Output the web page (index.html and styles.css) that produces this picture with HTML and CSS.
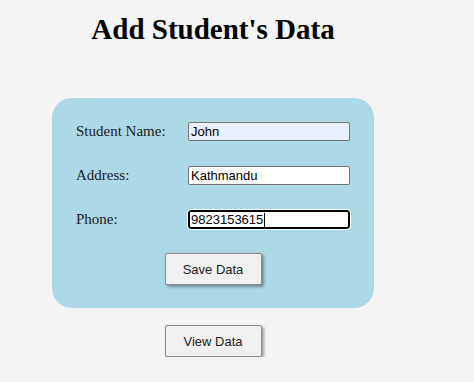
FILE: index.html
```html
<!DOCTYPE html>
<html>
<head>
<meta charset="utf-8">
<link rel="stylesheet" href="styles.css">
</head>
<body>
<div class="page">
  <h1 class="title">Add Student's Data</h1>
  <form class="card">
    <div class="fields">
      <label class="label">Student Name:</label>
      <div class="input autofill">John</div>
      <label class="label">Address:</label>
      <div class="input">Kathmandu</div>
      <label class="label">Phone:</label>
      <div class="input focused">9823153615<span class="caret"></span></div>
    </div>
    <div class="actions">
      <button type="button" class="btn">Save Data</button>
    </div>
  </form>
  <div class="actions outside">
    <button type="button" class="btn">View Data</button>
  </div>
</div>
</body>
</html>
```
FILE: styles.css
```css
html, body {
  margin: 0;
  padding: 0;
  background: #f4f4f4;
}
.page {
  width: 322px;
  margin-left: 52px;
  padding-top: 12px;
}
.title {
  margin: 0;
  font-family: "Liberation Serif", "Times New Roman", serif;
  font-weight: bold;
  font-size: 29px;
  line-height: 34px;
  text-align: center;
  color: #000;
}
.card {
  margin-top: 52px;
  background: #add8e6;
  border-radius: 20px;
  padding: 24px 24px 22px 24px;
  box-sizing: border-box;
  height: 210px;
}
.fields {
  display: grid;
  grid-template-columns: 112px 162px;
  row-gap: 25px;
  align-items: center;
}
.label {
  font-family: "Liberation Serif", "Times New Roman", serif;
  font-size: 15px;
  color: #1c1c1c;
}
.input {
  height: 19px;
  box-sizing: border-box;
  border: 1px solid #767676;
  border-radius: 2px;
  background: #fff;
  font-family: "Liberation Sans", Arial, sans-serif;
  font-size: 13px;
  line-height: 17px;
  padding: 0 2px;
  color: #000;
  display: flex;
  align-items: center;
}
.autofill {
  background: #e8f0fe;
}
.focused {
  border: 2px solid #000;
  border-radius: 3px;
  outline: 1px solid #fff;
  padding: 0 1px;
}
.caret {
  display: inline-block;
  width: 1px;
  height: 14px;
  background: #000;
  margin-left: 1px;
}
.actions {
  display: flex;
  justify-content: center;
}
.card .actions {
  margin-top: 24px;
}
.outside {
  margin-top: 17px;
}
.btn {
  width: 97px;
  height: 32px;
  box-sizing: border-box;
  background: #f0f0f0;
  border: 1px solid #8a8a8a;
  border-radius: 2px;
  box-shadow: 2px 2px 3px rgba(0, 0, 0, 0.35);
  font-family: "Liberation Sans", Arial, sans-serif;
  font-size: 13px;
  color: #222;
  padding: 0;
}
```
